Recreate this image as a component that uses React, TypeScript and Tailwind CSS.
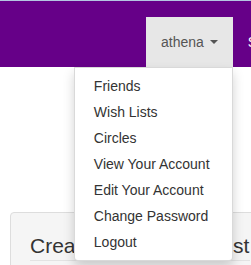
import { useState } from "react"

const menuItems = [
  "Friends",
  "Wish Lists",
  "Circles",
  "View Your Account",
  "Edit Your Account",
  "Change Password",
  "Logout",
]

export default function App() {
  const [open] = useState(true)

  return (
    <div
      className="h-[265px] w-[251px] overflow-hidden bg-white text-[14px] text-[#333]"
      style={{ fontFamily: '"Liberation Sans", Arial, sans-serif' }}
    >
      {/* Navbar */}
      <div className="border-t border-[#b3c6e2] bg-[#660088]">
        <div className="flex h-[66px] items-end">
          <div className="w-[146px] shrink-0" />
          <div className="relative shrink-0">
            <button className="flex h-[50px] items-center bg-[#e7e7e7] px-[15px] leading-[20px] text-[#555]">
              athena
              <span className="ml-[6px] inline-block h-0 w-0 border-x-[4px] border-t-[4px] border-x-transparent border-t-[#555]" />
            </button>
            {open && (
              <ul className="absolute right-0 top-full z-10 w-[159px] rounded-b-[4px] border border-[rgba(0,0,0,0.15)] bg-white py-[5px] shadow-[0_6px_12px_rgba(0,0,0,0.175)]">
                {menuItems.map((item) => (
                  <li key={item}>
                    <a className="block whitespace-nowrap px-[19px] py-[3px] leading-[20px] text-[#333]">{item}</a>
                  </li>
                ))}
              </ul>
            )}
          </div>
          <div className="flex h-[50px] shrink-0 items-center whitespace-nowrap px-[15px] leading-[20px] text-white">
            Sign out
          </div>
        </div>
      </div>

      {/* Panel */}
      <div className="ml-[10px] mt-[145px] w-[260px] rounded-[4px] border border-[#ddd] bg-[#f5f5f5] px-[19px] pt-[21px]">
        <h3 className="whitespace-nowrap border-b border-[#e3e3e3] pb-[3px] text-[21px] leading-[23px] text-[#333]">
          Create a New Wish List
        </h3>
        <div className="h-[20px]" />
      </div>
    </div>
  )
}
